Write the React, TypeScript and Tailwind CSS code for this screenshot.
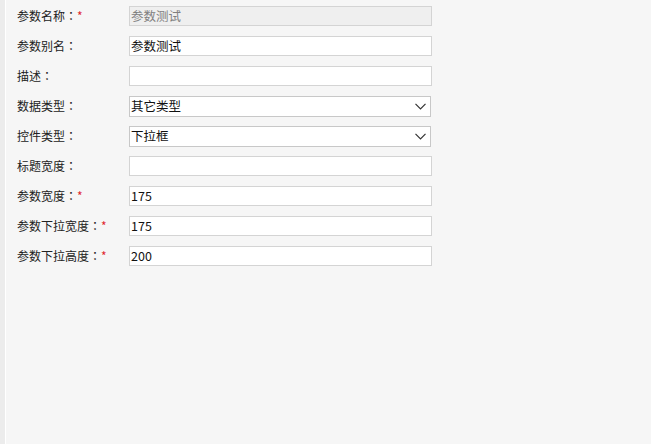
const FIELDS = [
  { label: "参数名称", required: true, value: "参数测试", kind: "disabled" },
  { label: "参数别名", required: false, value: "参数测试", kind: "input" },
  { label: "描述", required: false, value: "", kind: "input" },
  { label: "数据类型", required: false, value: "其它类型", kind: "select" },
  { label: "控件类型", required: false, value: "下拉框", kind: "select" },
  { label: "标题宽度", required: false, value: "", kind: "input" },
  { label: "参数宽度", required: true, value: "175", kind: "input" },
  { label: "参数下拉宽度", required: true, value: "175", kind: "input" },
  { label: "参数下拉高度", required: true, value: "200", kind: "input" },
];

const Chevron = () => (
  <svg width="11" height="7" viewBox="0 0 11 7" className="shrink-0">
    <path d="M0.5 0.8 L5.5 5.8 L10.5 0.8" fill="none" stroke="#333" strokeWidth="1.2" />
  </svg>
);

export default function App() {
  return (
    <div
      className="flex h-[444px] w-[651px] bg-[#f6f6f6] text-[12px] text-[#333]"
      style={{ fontFamily: '"Microsoft YaHei", "Noto Sans CJK SC", sans-serif' }}
    >
      <div className="w-[5px] shrink-0 bg-[#ececec]" />
      <div className="w-px shrink-0 bg-white" />
      <div className="flex flex-col pt-[6px]">
        {FIELDS.map((f, i) => (
          <div key={i} className="flex h-[30px] items-start">
            <div className="flex h-[20px] w-[123px] shrink-0 items-center pl-[11px] text-[12px] text-[#222]">
              {f.label}
              <span className="font-['Noto_Sans_CJK_TC',sans-serif]">：</span>
              {f.required && <span className="text-[#e0282e]">*</span>}
            </div>
            {f.kind === "select" ? (
              <div className="flex h-[21px] w-[302px] items-center justify-between border border-[#c8c8c8] bg-white pl-[1px] pr-[4px] text-[12.5px] text-[#111]">
                <span>{f.value}</span>
                <Chevron />
              </div>
            ) : (
              <div
                className={`flex h-[20px] w-[303px] items-center border border-[#d4d4d4] pl-[1px] text-[12.5px] ${
                  f.kind === "disabled" ? "bg-[#efefef] text-[#808080]" : "bg-white text-[#111]"
                }`}
              >
                {f.value}
              </div>
            )}
          </div>
        ))}
      </div>
    </div>
  );
}
